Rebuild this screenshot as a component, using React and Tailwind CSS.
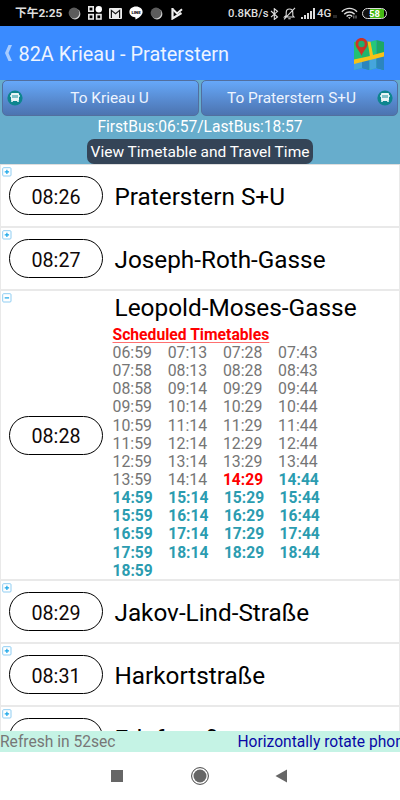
import React from 'react';

const schedule = [
  ['06:59', '07:13', '07:28', '07:43'],
  ['07:58', '08:13', '08:28', '08:43'],
  ['08:58', '09:14', '09:29', '09:44'],
  ['09:59', '10:14', '10:29', '10:44'],
  ['10:59', '11:14', '11:29', '11:44'],
  ['11:59', '12:14', '12:29', '12:44'],
  ['12:59', '13:14', '13:29', '13:44'],
  ['13:59', '14:14', '14:29', '14:44'],
  ['14:59', '15:14', '15:29', '15:44'],
  ['15:59', '16:14', '16:29', '16:44'],
  ['16:59', '17:14', '17:29', '17:44'],
  ['17:59', '18:14', '18:29', '18:44'],
  ['18:59'],
];

const NEXT_BUS = '14:29';

const stops = [
  { time: '08:26', name: 'Praterstern S+U' },
  { time: '08:27', name: 'Joseph-Roth-Gasse' },
  { time: '08:28', name: 'Leopold-Moses-Gasse', schedule },
  { time: '08:29', name: 'Jakov-Lind-Straße' },
  { time: '08:31', name: 'Harkortstraße' },
  { time: '08:32', name: 'Erlafstraße' },
];

function timeClass(time) {
  if (time === NEXT_BUS) return 'text-[15.6px] font-bold text-[#ff0000]';
  return time > NEXT_BUS ? 'text-[15.6px] font-bold text-[#2b9cb0]' : 'text-[#757575]';
}

function MoonDot({ className }) {
  return (
    <svg className={className} width="13" height="13" viewBox="0 0 13 13">
      <circle cx="7" cy="7" r="5.4" fill="#d0d0d0" />
      <circle cx="6" cy="6" r="5.4" fill="#5c5c5c" />
    </svg>
  );
}

function StatusBar() {
  return (
    <div className="flex h-[26px] shrink-0 items-center bg-black pl-[15px] text-[11.8px] font-bold text-[#dedede]">
      <span className="w-[47px] whitespace-nowrap pt-[2px] font-['Roboto','Noto_Sans_CJK_TC',sans-serif]">下午2:25</span>
      <MoonDot className="ml-[6px]" />
      <svg className="ml-[7px]" width="14" height="14" viewBox="0 0 14 14" fill="none" stroke="#e8e8e8" strokeWidth="1.6">
        <rect x="0.8" y="0.8" width="4.4" height="4.4" />
        <rect x="0.8" y="8.6" width="4.4" height="4.4" />
        <rect x="8.6" y="8.6" width="4.4" height="4.4" />
        <circle cx="10.8" cy="3.2" r="3.2" fill="#fff" stroke="none" />
      </svg>
      <svg className="ml-[7px]" width="13" height="11" viewBox="0 0 13 11">
        <rect width="13" height="11" rx="1" fill="#eee" />
        <path d="M2.4 10V2.4L6.5 5.7l4.1-3.3V10" fill="none" stroke="#161616" strokeWidth="1.2" />
      </svg>
      <svg className="ml-[7px]" width="14" height="14" viewBox="0 0 14 14">
        <path d="M7 .5C3.3.5.4 2.9.4 5.9c0 2.8 2.4 4.8 5.6 5.3.7.2.3 1 .5 2.3 3-1.5 7.1-4.3 7.1-7.6C13.6 2.9 10.7.5 7 .5z" fill="#fff" />
        <text x="7" y="7.6" textAnchor="middle" fontSize="4.4" fontWeight="900" fill="#111" fontFamily="Roboto, sans-serif">LINE</text>
      </svg>
      <MoonDot className="ml-[7px]" />
      <svg className="ml-[8px]" width="12" height="13" viewBox="0 0 12 13">
        <path d="M1.5 1v10.5L10.5 6" fill="none" stroke="#eee" strokeWidth="2.2" />
        <path d="M2 2.5l4 4L11 2.2" fill="none" stroke="#eee" strokeWidth="2" />
      </svg>
      <span className="ml-[45px] w-[41px] whitespace-nowrap pt-[2px] text-[11.3px] font-medium">0.8KB/s</span>
      <svg className="ml-[1px] mt-[2px]" width="9" height="12" viewBox="0 0 9 12" fill="none" stroke="#ddd" strokeWidth="1.1">
        <path d="M1 3l6.500 6L4.300 11.500V.7L7.500 3.300 1 9.200" />
      </svg>
      <svg className="ml-[4px] mt-px" width="13" height="13" viewBox="0 0 13 13" fill="none" stroke="#ddd" strokeWidth="1.1">
        <path d="M1.500 10h9.500L9.800 8.500V5.500C9.800 3.300 8.400 2 6.500 2S3.200 3.300 3.200 5.500v3L1.500 10zM5.300 11.800h2.400M12 .8L1 12.300" />
      </svg>
      <svg className="ml-[5px]" width="14" height="11" viewBox="0 0 14 11" fill="#ddd">
        <rect x="0" y="9" width="2" height="2" />
        <rect x="3" y="7" width="2" height="4" />
        <rect x="6" y="5" width="2" height="6" />
        <rect x="9" y="3" width="2" height="8" />
        <rect x="12" y="0" width="2" height="11" />
      </svg>
      <span className="ml-[2px] w-[15px] pt-[2px] text-[11.5px] font-medium">4G</span>
      <svg className="ml-[1px] mt-[6px]" width="4" height="5" viewBox="0 0 4 5" stroke="#555">
        <path d="M1 1v3M3 1v3" />
      </svg>
      <svg className="ml-[4px] mt-px" width="17" height="13" viewBox="0 0 17 13" fill="none" stroke="#ddd" strokeWidth="1.4">
        <path d="M.8 4.800C5 .2 12 .2 16 4.800M3.200 7.200c3-3 7.500-3 10.400 0M5.600 9.500c1.600-1.600 4-1.600 5.600 0" />
        <path d="M7 10.300l1.400 1.700 1.400-1.700z" fill="#ddd" stroke="none" />
        <path d="M12.800 8.500v3M15 8.500v3" stroke="#999" strokeWidth="1" />
      </svg>
      <div className="ml-[4px] mt-px flex h-[11px] w-[25px] shrink-0 items-center justify-center rounded-full border border-[#ddd] bg-[linear-gradient(90deg,#111_0_32%,#43b913_32%_90%,#000_90%)] text-[9.5px] leading-none text-white">
        58
      </div>
    </div>
  );
}

function MapIcon() {
  return (
    <svg className="ml-auto mr-[15px] mt-px" width="32" height="34" viewBox="0 0 32 34">
      <path d="M1 5l8-2v28l-8 2z" fill="#20c172" />
      <path d="M9 3l7.5 2v28L9 31z" fill="#20b56c" />
      <path d="M16.500 5l7-2v28l-7 2z" fill="#24c77b" />
      <path d="M23.500 3l7.500 2v28l-7.500-2z" fill="#1da866" />
      <path d="M1 24l8-2v9l-8 2z" fill="#45a5dd" />
      <path d="M9 22l7.500-1v12L9 31z" fill="#2c85bd" />
      <path d="M16.500 21l7-2v12l-7 2z" fill="#45a5dd" />
      <path d="M23.500 19l7.500-2v16l-7.500-2z" fill="#2c85bd" />
      <path d="M14.500 4.500l3 .3L20 18l11-3v4.500L1 27v-4.500L17 19z" fill="#f8c216" />
      <path d="M8.500 1C4.900 1 2.500 3.600 2.500 7c0 4 4.800 7.500 6 12 1.200-4.500 6-8 6-12 0-3.400-2.400-6-6-6z" fill="#cb3425" />
      <circle cx="8.500" cy="7" r="3.200" fill="#20ad6d" />
    </svg>
  );
}

function BusIcon() {
  return (
    <svg className="shrink-0" width="16" height="16" viewBox="0 0 16 16">
      <circle cx="8" cy="8" r="7.6" fill="#0e858e" />
      <rect x="4" y="3" width="8" height="8" rx="1" fill="#e9f5f5" />
      <rect x="5" y="5" width="6" height="3" fill="#7fc3c8" />
      <rect x="3" y="5" width="1" height="2" fill="#b5dcdf" />
      <rect x="12" y="5" width="1" height="2" fill="#b5dcdf" />
      <rect x="4" y="11" width="2" height="1" fill="#b5dcdf" />
      <rect x="10" y="11" width="2" height="1" fill="#b5dcdf" />
    </svg>
  );
}

function ExpandIcon({ open }) {
  return (
    <svg className="absolute left-[1px] top-[2px]" width="10" height="10" viewBox="0 0 10 10" fill="none">
      <rect x="0.7" y="0.7" width="8.3" height="8.3" rx="1" stroke="#8fcdf2" />
      <path d={open ? 'M2.700 4.900h4.400' : 'M2.700 4.900h4.400M4.900 2.700v4.400'} stroke="#18a5e8" strokeWidth="1.2" />
    </svg>
  );
}

function StopRow({ stop }) {
  return (
    <div className={`relative mx-px flex shrink-0 items-center border-b-2 border-[#e9e9e9] pl-[8px] ${stop.schedule ? 'h-[290px]' : 'h-[63px]'}`}>
      <ExpandIcon open={!!stop.schedule} />
      <div className="flex h-[39px] w-[94px] items-center justify-center rounded-[20px] border border-black pt-[4px] text-[19.7px] text-[#100808]">
        {stop.time}
      </div>
      {stop.schedule ? (
        <div className="ml-[9.5px] h-full">
          <div className="pb-[2px] pl-[2px] text-[24.4px] leading-[33px] text-black">{stop.name}</div>
          <div className="text-[15.7px] font-bold leading-[18px] text-[#ff0000] underline decoration-[#ff7070] decoration-1 underline-offset-2">Scheduled Timetables</div>
          {stop.schedule.map(row => (
            <div key={row[0]} className="h-[18.15px] whitespace-pre text-[15.85px] leading-[18px]">
              {row.map((time, i) => (
                <span key={time} className={timeClass(time)}>{time}{i < row.length - 1 ? '    ' : ''}</span>
              ))}
            </div>
          ))}
        </div>
      ) : (
        <div className="ml-[11.5px] pt-[3px] text-[24.3px] text-black">{stop.name}</div>
      )}
    </div>
  );
}

export default function App() {
  return (
    <div className="flex h-[800px] w-[400px] flex-col overflow-hidden bg-white font-['Roboto',sans-serif]">
      <StatusBar />

      <header className="flex h-[54px] shrink-0 items-center bg-[#3a8bff] text-[#eef4ff]">
        <svg className="ml-[4px]" width="9" height="18" viewBox="0 0 9 18">
          <path d="M4.500 1H8L4.500 9 8 17H4.500L1 9z" fill="#a8ccff" />
        </svg>
        <h1 className="ml-[5.5px] pt-[3px] text-[19.9px]">82A Krieau - Praterstern</h1>
        <MapIcon />
      </header>

      <div className="flex h-[84px] shrink-0 flex-col items-center bg-[#67adcc] px-[2px]">
        <div className="flex w-full gap-[2px] text-[15.4px] text-[#edf4ff]">
          <button className="flex h-[36px] flex-1 items-center rounded-[5px] border border-[#526f9e] bg-linear-to-b from-[#66a8fa] to-[#4c74b0] pl-[4px] pr-[4px]">
            <BusIcon />
            <span className="flex-1 pl-[2px] pt-[2px]">To Krieau U</span>
          </button>
          <button className="flex h-[36px] flex-1 items-center rounded-[5px] border border-[#526f9e] bg-linear-to-b from-[#66a8fa] to-[#4c74b0] pl-[4px] pr-[4px]">
            <span className="flex-1 pt-[2px]">To Praterstern S+U</span>
            <BusIcon />
          </button>
        </div>
        <div className="h-[23px] text-[15.6px] leading-[23px] text-white">FirstBus:06:57/LastBus:18:57</div>
        <button className="h-[25px] w-[226px] whitespace-nowrap rounded-[7px] bg-[#344457] pt-[2px] text-[15.5px] text-white">
          View Timetable and Travel Time
        </button>
      </div>

      <main className="flex min-h-0 flex-1 flex-col overflow-hidden border-t border-[#dedede] shadow-[inset_1px_0_#e9e9e9,inset_-1px_0_#e9e9e9]">
        {stops.map(stop => (
          <StopRow key={stop.time} stop={stop} />
        ))}
      </main>

      <div className="flex h-[21px] shrink-0 items-center overflow-hidden whitespace-nowrap bg-[#c5f3e5] pt-[2px] text-[15.6px]">
        <span className="w-[237.5px] shrink-0 text-[#777]">Refresh in 52sec</span>
        <span className="text-[#0909a5]">Horizontally rotate phone</span>
      </div>

      <nav className="flex h-[48px] shrink-0 items-center pl-[111px]">
        <div className="size-[12px] bg-[#666]" />
        <svg className="ml-[68px]" width="18" height="18" viewBox="0 0 18 18">
          <circle cx="9" cy="9" r="8.400" fill="none" stroke="#444" />
          <circle cx="9" cy="9" r="6.500" fill="#666" />
        </svg>
        <svg className="ml-[66px]" width="13" height="14" viewBox="0 0 13 14">
          <path d="M.5 7L12 .5v13z" fill="#666" />
        </svg>
      </nav>
    </div>
  );
}
